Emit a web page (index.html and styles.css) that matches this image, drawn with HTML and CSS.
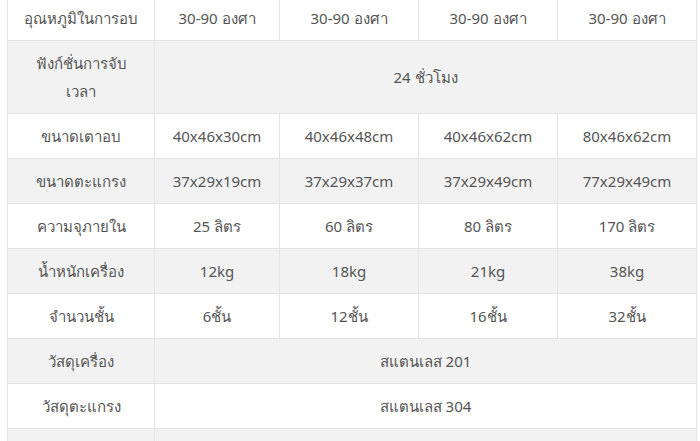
FILE: index.html
```html
<!DOCTYPE html>
<html lang="th">
<head>
<meta charset="utf-8">
<link rel="stylesheet" href="styles.css">
</head>
<body>
<div class="wrap">
<table class="spec">
<colgroup>
<col class="c1"><col class="c2"><col class="c3"><col class="c4"><col class="c5">
</colgroup>
<tbody>
<tr><td>อุณหภูมิในการอบ</td><td>30-90 องศา</td><td>30-90 องศา</td><td>30-90 องศา</td><td>30-90 องศา</td></tr>
<tr class="alt"><td>ฟังก์ชั่นการจับ<br>เวลา</td><td colspan="4">24 ชั่วโมง</td></tr>
<tr><td>ขนาดเตาอบ</td><td>40x46x30cm</td><td>40x46x48cm</td><td>40x46x62cm</td><td>80x46x62cm</td></tr>
<tr class="alt"><td>ขนาดตะแกรง</td><td>37x29x19cm</td><td>37x29x37cm</td><td>37x29x49cm</td><td>77x29x49cm</td></tr>
<tr><td>ความจุภายใน</td><td>25 ลิตร</td><td>60 ลิตร</td><td>80 ลิตร</td><td>170 ลิตร</td></tr>
<tr class="alt"><td>น้ำหนักเครื่อง</td><td>12kg</td><td>18kg</td><td>21kg</td><td>38kg</td></tr>
<tr><td>จำนวนชั้น</td><td>6ชั้น</td><td>12ชั้น</td><td>16ชั้น</td><td>32ชั้น</td></tr>
<tr class="alt"><td>วัสดุเครื่อง</td><td colspan="4">สแตนเลส 201</td></tr>
<tr><td>วัสดุตะแกรง</td><td colspan="4">สแตนเลส 304</td></tr>
<tr class="alt"><td>&nbsp;</td><td colspan="4">&nbsp;</td></tr>
</tbody>
</table>
</div>
</body>
</html>
```
FILE: styles.css
```css
html, body {
  margin: 0;
  padding: 0;
  background: #ffffff;
}
body {
  font-family: "Noto Sans", "Open Sans", sans-serif;
  color: #555555;
  font-size: 15px;
}
.wrap {
  padding-left: 7px;
  margin-top: -5px;
  width: 689px;
}
.spec {
  width: 689px;
  table-layout: fixed;
  border-collapse: collapse;
}
.c1 { width: 147px; }
.c2 { width: 125px; }
.c3 { width: 139px; }
.c4 { width: 139px; }
.c5 { width: 139px; }
.spec td {
  border: 1px solid #e3e3e3;
  padding: 8px 6px;
  line-height: 28px;
  text-align: center;
  vertical-align: middle;
}
.spec tr.alt td {
  background: #f2f2f2;
}
```
